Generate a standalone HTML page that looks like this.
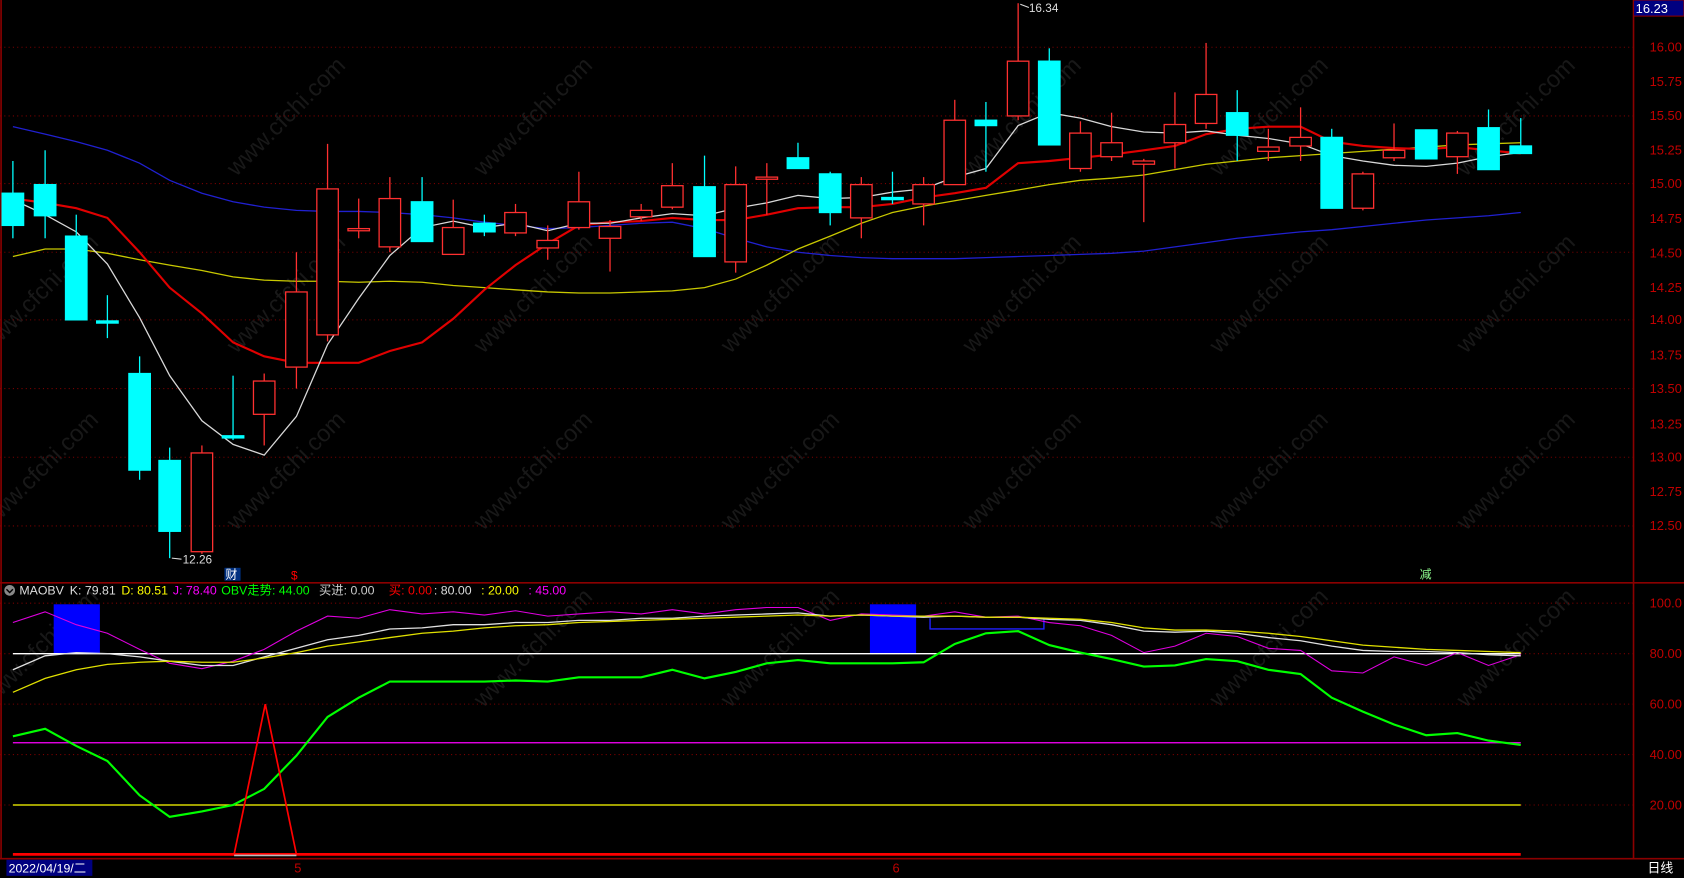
<!DOCTYPE html>
<html><head><meta charset="utf-8"><style>
html,body{margin:0;padding:0;background:#000;overflow:hidden}
svg{display:block}
text{font-family:"Liberation Sans","Noto Sans CJK SC",sans-serif}
</style></head><body>
<svg width="1684" height="878" viewBox="0 0 1568 818" preserveAspectRatio="none" xmlns="http://www.w3.org/2000/svg">
<rect width="1568" height="818" fill="#000"/>
<!-- watermark -->
<g fill="#181818" font-size="22" font-family="Liberation Sans,sans-serif">
<text transform="translate(-10,330) rotate(-45)">www.cfchi.com</text>
<text transform="translate(220,165) rotate(-45)">www.cfchi.com</text>
<text transform="translate(450,330) rotate(-45)">www.cfchi.com</text>
<text transform="translate(680,330) rotate(-45)">www.cfchi.com</text>
<text transform="translate(905,165) rotate(-45)">www.cfchi.com</text>
<text transform="translate(1135,165) rotate(-45)">www.cfchi.com</text>
<text transform="translate(1365,330) rotate(-45)">www.cfchi.com</text>
<text transform="translate(-10,495) rotate(-45)">www.cfchi.com</text>
<text transform="translate(220,495) rotate(-45)">www.cfchi.com</text>
<text transform="translate(450,495) rotate(-45)">www.cfchi.com</text>
<text transform="translate(680,495) rotate(-45)">www.cfchi.com</text>
<text transform="translate(905,495) rotate(-45)">www.cfchi.com</text>
<text transform="translate(1135,495) rotate(-45)">www.cfchi.com</text>
<text transform="translate(1365,495) rotate(-45)">www.cfchi.com</text>
<text transform="translate(220,330) rotate(-45)">www.cfchi.com</text>
<text transform="translate(905,330) rotate(-45)">www.cfchi.com</text>
<text transform="translate(1135,330) rotate(-45)">www.cfchi.com</text>
<text transform="translate(450,165) rotate(-45)">www.cfchi.com</text>
<text transform="translate(1365,165) rotate(-45)">www.cfchi.com</text>
<text transform="translate(-10,660) rotate(-45)">www.cfchi.com</text>
<text transform="translate(450,660) rotate(-45)">www.cfchi.com</text>
<text transform="translate(680,660) rotate(-45)">www.cfchi.com</text>
<text transform="translate(1135,660) rotate(-45)">www.cfchi.com</text>
<text transform="translate(1365,660) rotate(-45)">www.cfchi.com</text>
</g>
<!-- grid -->
<g stroke="#7a0000" stroke-dasharray="1,3" stroke-width="1">
<line x1="0" y1="44" x2="1521" y2="44"/><line x1="0" y1="108" x2="1521" y2="108"/>
<line x1="0" y1="171" x2="1521" y2="171"/><line x1="0" y1="235" x2="1521" y2="235"/>
<line x1="0" y1="298" x2="1521" y2="298"/><line x1="0" y1="362" x2="1521" y2="362"/>
<line x1="0" y1="426" x2="1521" y2="426"/><line x1="0" y1="490" x2="1521" y2="490"/>
<line x1="0" y1="562" x2="1521" y2="562"/><line x1="0" y1="609" x2="1521" y2="609"/>
<line x1="0" y1="656" x2="1521" y2="656"/><line x1="0" y1="703" x2="1521" y2="703"/>
<line x1="0" y1="750" x2="1521" y2="750"/>
</g>
<!-- frame -->
<g stroke="#8b0000" stroke-width="1.5" fill="none">
<line x1="1521" y1="0" x2="1521" y2="800"/>
<line x1="0" y1="543" x2="1568" y2="543"/>
<line x1="0" y1="800" x2="1568" y2="800"/>
<line x1="1" y1="0" x2="1" y2="800"/>
</g>
<g fill="#c00000" font-size="12">
<text x="1536" y="48">16.00</text><text x="1536" y="80">15.75</text><text x="1536" y="112">15.50</text>
<text x="1536" y="144">15.25</text><text x="1536" y="175">15.00</text><text x="1536" y="208">14.75</text>
<text x="1536" y="240">14.50</text><text x="1536" y="272">14.25</text><text x="1536" y="302">14.00</text>
<text x="1536" y="335">13.75</text><text x="1536" y="366">13.50</text><text x="1536" y="399">13.25</text>
<text x="1536" y="430">13.00</text><text x="1536" y="462">12.75</text><text x="1536" y="494">12.50</text>
<text x="1536" y="566">100.0</text><text x="1536" y="613">80.00</text><text x="1536" y="660">60.00</text>
<text x="1536" y="707">40.00</text><text x="1536" y="754">20.00</text>
<text x="274" y="813">5</text><text x="831" y="813">6</text>
</g>
<rect x="1521" y="0" width="47" height="15" fill="#000080" stroke="#8b0000"/>
<text x="1523" y="12" fill="#fff" font-size="12">16.23</text>
<rect x="6" y="801" width="80" height="15" fill="#000080"/>
<text x="8" y="813" fill="#fff" font-size="11.5">2022/04/19/二</text>
<text x="1534" y="813" fill="#fff" font-size="12">日线</text>
<!-- MAs -->
<polyline fill="none" stroke="#2020d0" stroke-width="1.2" points="12,118 42,125 71,132 100,140 130,152 158,168 188,180 217,188 246,193 276,196 305,197 334,197 363,198 393,200 422,203 451,207 480,210 510,213 539,212 568,210 597,208 626,207 656,213 685,222 714,230 743,235 773,238 802,240 831,241 860,241 889,241 918,240 948,239 977,238 1006,237 1035,236 1065,234 1094,230 1123,226 1152,222 1181,219 1211,216 1240,214 1269,211 1298,208 1328,205 1357,203 1386,201 1416,198"/>
<polyline fill="none" stroke="#c8c800" stroke-width="1.2" points="12,239 42,232 71,232 100,236 130,242 158,247 188,252 217,258 246,261 276,262 305,262 334,263 363,262 393,263 422,266 451,268 480,270 510,272 539,273 568,273 597,272 626,271 656,268 685,260 714,247 743,232 773,220 802,208 831,198 860,192 889,187 918,182 948,177 977,172 1006,168 1035,166 1065,163 1094,158 1123,153 1152,150 1181,147 1211,145 1240,143 1269,141 1298,139 1328,137 1357,135 1386,134 1416,133"/>
<polyline fill="none" stroke="#e00000" stroke-width="2" points="12,185 42,189 71,194 100,203 130,235 158,268 188,292 217,319 246,332 276,338 305,338 334,338 363,327 393,319 422,297 451,270 480,247 510,227 539,210 568,207 597,206 626,203 656,205 685,205 714,200 743,194 773,193 802,193 831,190 860,184 889,180 918,175 948,152 977,150 1006,147 1035,144 1065,140 1094,136 1123,125 1152,120 1181,118 1211,118 1240,132 1269,136 1298,138 1328,139 1357,137 1386,140 1416,143"/>
<polyline fill="none" stroke="#d8d8d8" stroke-width="1.2" points="12,186 42,200 71,216 100,246 130,296 158,350 188,392 217,414 246,424 276,388 305,321 334,278 363,238 393,212 422,206 451,212 480,208 510,215 539,208 568,208 597,203 626,199 656,201 685,194 714,189 743,182 773,185 802,184 831,179 860,176 889,165 918,157 948,117 977,105 1006,110 1035,118 1065,123 1094,124 1123,122 1152,126 1181,129 1211,134 1240,145 1269,150 1298,154 1328,155 1357,152 1386,146 1416,142"/>
<!-- candles -->
<g stroke-width="1.2">
<g stroke="#00ffff" fill="#00ffff">
<line x1="12" y1="150" x2="12" y2="222"/><rect x="2" y="180" width="20" height="30"/>
<line x1="42" y1="140" x2="42" y2="222"/><rect x="32" y="172" width="20" height="29"/>
<line x1="71" y1="200" x2="71" y2="298"/><rect x="61" y="220" width="20" height="78"/>
<line x1="100" y1="275" x2="100" y2="315"/><rect x="90" y="299" width="20" height="2"/>
<line x1="130" y1="332" x2="130" y2="447"/><rect x="120" y="348" width="20" height="90"/>
<line x1="158" y1="417" x2="158" y2="520"/><rect x="148" y="429" width="20" height="66"/>
<line x1="217" y1="350" x2="217" y2="410"/><rect x="207" y="406" width="20" height="2"/>
<line x1="393" y1="165" x2="393" y2="225"/><rect x="383" y="188" width="20" height="37"/>
<line x1="451" y1="200" x2="451" y2="220"/><rect x="441" y="208" width="20" height="8"/>
<line x1="656" y1="145" x2="656" y2="239"/><rect x="646" y="174" width="20" height="65"/>
<line x1="743" y1="133" x2="743" y2="157"/><rect x="733" y="147" width="20" height="10"/>
<line x1="773" y1="160" x2="773" y2="210"/><rect x="763" y="162" width="20" height="36"/>
<line x1="831" y1="160" x2="831" y2="190"/><rect x="821" y="184" width="20" height="2"/>
<line x1="918" y1="95" x2="918" y2="160"/><rect x="908" y="112" width="20" height="5"/>
<line x1="977" y1="45" x2="977" y2="135"/><rect x="967" y="57" width="20" height="78"/>
<line x1="1152" y1="84" x2="1152" y2="150"/><rect x="1142" y="105" width="20" height="21"/>
<line x1="1240" y1="120" x2="1240" y2="194"/><rect x="1230" y="128" width="20" height="66"/>
<line x1="1328" y1="121" x2="1328" y2="148"/><rect x="1318" y="121" width="20" height="27"/>
<line x1="1386" y1="102" x2="1386" y2="158"/><rect x="1376" y="119" width="20" height="39"/>
<line x1="1416" y1="110" x2="1416" y2="143"/><rect x="1406" y="136" width="20" height="7"/>
</g>
<g stroke="#ff3030" fill="#000">
<line x1="188" y1="415" x2="188" y2="516"/><rect x="178" y="422" width="20" height="92"/>
<line x1="246" y1="348" x2="246" y2="415"/><rect x="236" y="355" width="20" height="31"/>
<line x1="276" y1="235" x2="276" y2="362"/><rect x="266" y="272" width="20" height="70"/>
<line x1="305" y1="134" x2="305" y2="318"/><rect x="295" y="176" width="20" height="136"/>
<line x1="334" y1="185" x2="334" y2="222"/><rect x="324" y="213" width="20" height="2"/>
<line x1="363" y1="165" x2="363" y2="235"/><rect x="353" y="185" width="20" height="45"/>
<line x1="422" y1="186" x2="422" y2="237"/><rect x="412" y="212" width="20" height="25"/>
<line x1="480" y1="190" x2="480" y2="220"/><rect x="470" y="198" width="20" height="19"/>
<line x1="510" y1="210" x2="510" y2="242"/><rect x="500" y="224" width="20" height="7"/>
<line x1="539" y1="160" x2="539" y2="214"/><rect x="529" y="188" width="20" height="24"/>
<line x1="568" y1="205" x2="568" y2="253"/><rect x="558" y="211" width="20" height="11"/>
<line x1="597" y1="190" x2="597" y2="206"/><rect x="587" y="196" width="20" height="6"/>
<line x1="626" y1="152" x2="626" y2="195"/><rect x="616" y="173" width="20" height="20"/>
<line x1="685" y1="155" x2="685" y2="254"/><rect x="675" y="172" width="20" height="72"/>
<line x1="714" y1="152" x2="714" y2="200"/><rect x="704" y="165" width="20" height="2"/>
<line x1="802" y1="165" x2="802" y2="222"/><rect x="792" y="172" width="20" height="31"/>
<line x1="860" y1="165" x2="860" y2="210"/><rect x="850" y="172" width="20" height="18"/>
<line x1="889" y1="93" x2="889" y2="172"/><rect x="879" y="112" width="20" height="60"/>
<line x1="948" y1="3" x2="948" y2="112"/><rect x="938" y="57" width="20" height="51"/>
<line x1="1006" y1="113" x2="1006" y2="160"/><rect x="996" y="124" width="20" height="33"/>
<line x1="1035" y1="105" x2="1035" y2="150"/><rect x="1025" y="133" width="20" height="13"/>
<line x1="1065" y1="148" x2="1065" y2="207"/><rect x="1055" y="150" width="20" height="3"/>
<line x1="1094" y1="86" x2="1094" y2="157"/><rect x="1084" y="116" width="20" height="17"/>
<line x1="1123" y1="40" x2="1123" y2="120"/><rect x="1113" y="88" width="20" height="27"/>
<line x1="1181" y1="120" x2="1181" y2="150"/><rect x="1171" y="137" width="20" height="4"/>
<line x1="1211" y1="100" x2="1211" y2="150"/><rect x="1201" y="128" width="20" height="8"/>
<line x1="1269" y1="160" x2="1269" y2="196"/><rect x="1259" y="162" width="20" height="32"/>
<line x1="1298" y1="115" x2="1298" y2="150"/><rect x="1288" y="140" width="20" height="7"/>
<line x1="1357" y1="122" x2="1357" y2="162"/><rect x="1347" y="124" width="20" height="22"/>
</g>
</g>
<text x="958" y="11" fill="#ddd" font-size="11">16.34</text>
<line x1="950" y1="4" x2="958" y2="7" stroke="#ddd"/>
<text x="170" y="525" fill="#ddd" font-size="11">12.26</text>
<line x1="160" y1="520" x2="169" y2="521" stroke="#ddd"/>
<rect x="209" y="529" width="15" height="12" fill="#003080"/>
<text x="210" y="539" fill="#fff" font-size="11">财</text>
<text x="271" y="540" fill="#ff0000" font-size="11">$</text>
<text x="1322" y="539" fill="#90ff90" font-size="11">减</text>
<circle cx="9" cy="550" r="5" fill="#888"/>
<path d="M6,549 L9,552 L12,549" stroke="#000" fill="none" stroke-width="1.3"/>
<g font-size="11.5">
<text x="18" y="554" fill="#ddd">MAOBV</text><text x="65" y="554" fill="#ddd">K: 79.81</text>
<text x="113" y="554" fill="#ffff00">D: 80.51</text><text x="161" y="554" fill="#ff00ff">J: 78.40</text>
<text x="206" y="554" fill="#00ff00">OBV走势: 44.00</text><text x="297" y="554" fill="#ccc">买进: 0.00</text>
<text x="362" y="554" fill="#ff0000">买: 0.00</text><text x="404" y="554" fill="#ddd">: 80.00</text>
<text x="448" y="554" fill="#ffff00">: 20.00</text><text x="492" y="554" fill="#ff00ff">: 45.00</text>
</g>
<rect x="50" y="563" width="43" height="46" fill="#0000ff"/>
<rect x="810" y="563" width="43" height="46" fill="#0000ff"/>
<polyline fill="none" stroke="#2020ff" stroke-width="1.3" points="866,576 866,586 972,586 972,576"/>
<line x1="12" y1="609" x2="1416" y2="609" stroke="#fff" stroke-width="1.2"/>
<line x1="12" y1="692" x2="1416" y2="692" stroke="#ff00ff" stroke-width="1.2"/>
<line x1="12" y1="750" x2="1416" y2="750" stroke="#ffff00" stroke-width="1.2"/>
<polyline fill="none" stroke="#e000e0" stroke-width="1" points="12,580 42,570 71,582 100,590 130,605 158,618 188,623 217,616 246,605 276,588 305,574 334,576 363,568 393,572 422,570 451,573 480,569 510,574 539,572 568,570 597,572 626,568 656,572 685,568 714,566 743,566 773,578 802,572 831,573 860,574 889,570 918,575 948,574 977,580 1006,583 1035,592 1065,608 1094,602 1123,590 1152,593 1181,604 1211,606 1240,625 1269,627 1298,612 1328,620 1357,608 1386,620 1416,610"/>
<polyline fill="none" stroke="#e0e0e0" stroke-width="1.2" points="12,624 42,611 71,608 100,609 130,612 158,616 188,620 217,620 246,612 276,604 305,596 334,592 363,586 393,585 422,582 451,582 480,580 510,580 539,578 568,578 597,576 626,576 656,574 685,573 714,572 743,571 773,574 802,573 831,574 860,575 889,574 918,575 948,575 977,577 1006,578 1035,582 1065,588 1094,589 1123,588 1152,590 1181,594 1211,597 1240,602 1269,606 1298,607 1328,607 1357,608 1386,610 1416,611"/>
<polyline fill="none" stroke="#e0e000" stroke-width="1.2" points="12,645 42,632 71,624 100,619 130,617 158,616 188,617 217,617 246,613 276,608 305,602 334,598 363,594 393,590 422,588 451,585 480,583 510,582 539,580 568,579 597,578 626,577 656,576 685,575 714,574 743,573 773,574 802,573 831,574 860,574 889,574 918,575 948,575 977,576 1006,577 1035,580 1065,585 1094,587 1123,587 1152,588 1181,590 1211,593 1240,597 1269,601 1298,603 1328,605 1357,606 1386,607 1416,608"/>
<polyline fill="none" stroke="#00ff00" stroke-width="2" points="12,686 42,679 71,695 100,709 130,741 158,761 188,756 217,750 246,735 276,704 305,668 334,650 363,635 393,635 422,635 451,635 480,634 510,635 539,631 568,631 597,631 626,624 656,632 685,626 714,618 743,615 773,618 802,618 831,618 860,617 889,600 918,590 948,588 977,601 1006,608 1035,614 1065,621 1094,620 1123,614 1152,616 1181,624 1211,628 1240,650 1269,663 1298,675 1328,685 1357,683 1386,690 1416,694"/>
<polyline fill="none" stroke="#ff0000" stroke-width="1.6" points="218,796 247,656 276,796"/>
<line x1="12" y1="796" x2="1416" y2="796" stroke="#ff0000" stroke-width="2.5"/>
<line x1="218" y1="797" x2="276" y2="797" stroke="#bbb" stroke-width="1.5"/>
</svg>
</body></html>
